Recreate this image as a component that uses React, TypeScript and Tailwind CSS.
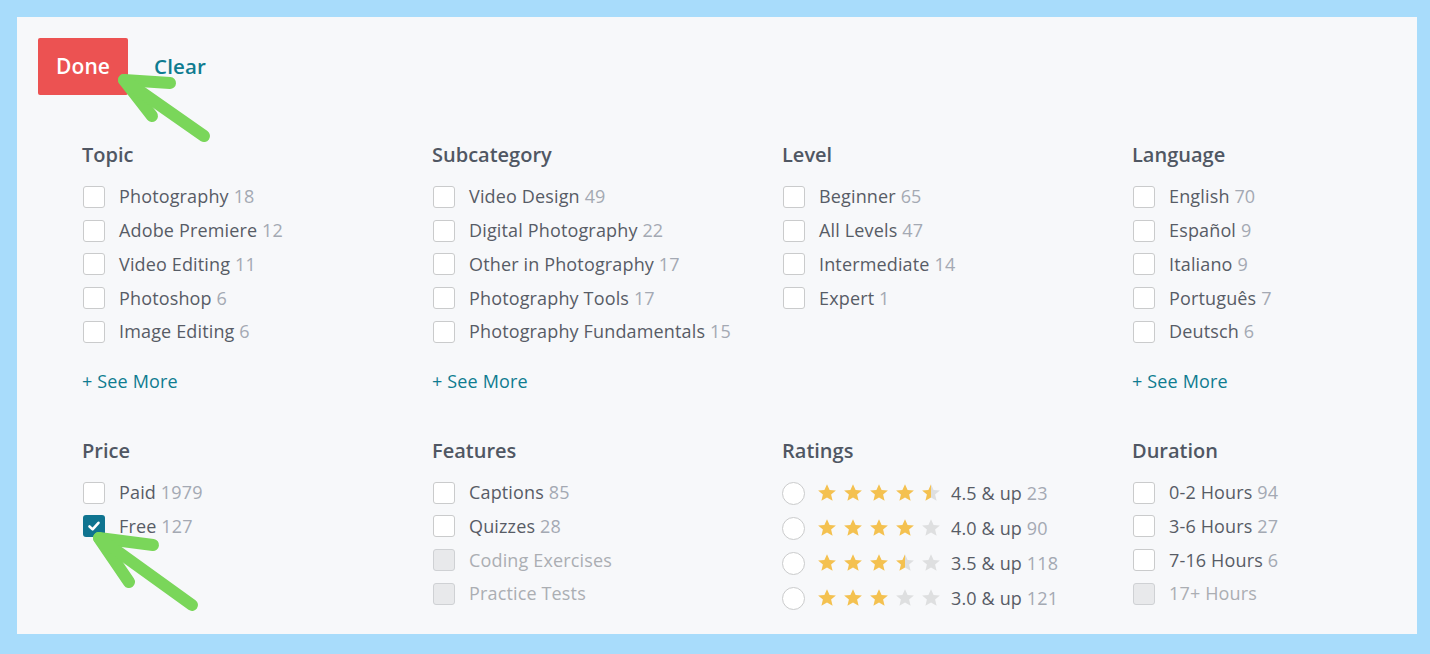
import React from "react";

// filter panel: four columns of checkbox groups, two sections

type Item = { label: string; count?: number; disabled?: boolean; checked?: boolean };
type Group = { title: string; items: Item[]; more?: boolean };

const TOP: Group[] = [
  {
    title: "Topic",
    more: true,
    items: [
      { label: "Photography", count: 18 },
      { label: "Adobe Premiere", count: 12 },
      { label: "Video Editing", count: 11 },
      { label: "Photoshop", count: 6 },
      { label: "Image Editing", count: 6 },
    ],
  },
  {
    title: "Subcategory",
    more: true,
    items: [
      { label: "Video Design", count: 49 },
      { label: "Digital Photography", count: 22 },
      { label: "Other in Photography", count: 17 },
      { label: "Photography Tools", count: 17 },
      { label: "Photography Fundamentals", count: 15 },
    ],
  },
  {
    title: "Level",
    items: [
      { label: "Beginner", count: 65 },
      { label: "All Levels", count: 47 },
      { label: "Intermediate", count: 14 },
      { label: "Expert", count: 1 },
    ],
  },
  {
    title: "Language",
    more: true,
    items: [
      { label: "English", count: 70 },
      { label: "Español", count: 9 },
      { label: "Italiano", count: 9 },
      { label: "Português", count: 7 },
      { label: "Deutsch", count: 6 },
    ],
  },
];

const PRICE: Group = {
  title: "Price",
  items: [
    { label: "Paid", count: 1979 },
    { label: "Free", count: 127, checked: true },
  ],
};
const FEATURES: Group = {
  title: "Features",
  items: [
    { label: "Captions", count: 85 },
    { label: "Quizzes", count: 28 },
    { label: "Coding Exercises", disabled: true },
    { label: "Practice Tests", disabled: true },
  ],
};
const DURATION: Group = {
  title: "Duration",
  items: [
    { label: "0-2 Hours", count: 94 },
    { label: "3-6 Hours", count: 27 },
    { label: "7-16 Hours", count: 6 },
    { label: "17+ Hours", disabled: true },
  ],
};

const RATINGS = [
  { value: 4.5, label: "4.5 & up", count: 23 },
  { value: 4.0, label: "4.0 & up", count: 90 },
  { value: 3.5, label: "3.5 & up", count: 118 },
  { value: 3.0, label: "3.0 & up", count: 121 },
];

function Box({ checked, disabled }: { checked?: boolean; disabled?: boolean }) {
  if (checked) {
    return (
      <span className="w-[22px] h-[22px] rounded-[3px] bg-[#0f7490] flex items-center justify-center flex-shrink-0">
        <svg width="14" height="14" viewBox="0 0 14 14">
          <path d="M2.5 7.5 L5.6 10.4 L11.5 3.8" fill="none" stroke="#fff" strokeWidth="2.6" strokeLinecap="round" strokeLinejoin="round" />
        </svg>
      </span>
    );
  }
  return (
    <span
      className={
        disabled
          ? "w-[22px] h-[22px] rounded-[3px] border border-[#cfd1d4] bg-[#e8e9eb] flex-shrink-0"
          : "w-[22px] h-[22px] rounded-[3px] border border-[#cacbcc] bg-white flex-shrink-0"
      }
    />
  );
}

function Row({ item }: { item: Item }) {
  return (
    <div className="h-[33.75px] flex items-center pl-px">
      <Box checked={item.checked} disabled={item.disabled} />
      <span className={item.disabled ? "ml-[14px] text-[#abaeb3]" : "ml-[14px] text-[#575c66]"}>
        {item.label}
        {item.count !== undefined && <span className="text-[#a4a9b3]"> {item.count}</span>}
      </span>
    </div>
  );
}

function Heading({ children }: { children: React.ReactNode }) {
  return <h3 className="text-[20px] leading-[28px] font-semibold text-[#505763] mb-[11px] tracking-normal">{children}</h3>;
}

function GroupCol({ g }: { g: Group }) {
  return (
    <div>
      <Heading>{g.title}</Heading>
      {g.items.map((it) => (
        <Row key={it.label} item={it} />
      ))}
      {g.more && <div className="mt-[20px] leading-[24px] text-[#0f7c90]">+ See More</div>}
    </div>
  );
}

function Star({ fill, id }: { fill: number; id: string }) {
  return (
    <svg width="20" height="20" viewBox="0 0 20 20" className="flex-shrink-0">
      <defs>
        <linearGradient id={id} x1="0" x2="1" y1="0" y2="0">
          <stop offset={fill} stopColor="#f4c150" />
          <stop offset={fill} stopColor="#dedfe0" />
        </linearGradient>
      </defs>
      <path
        d="M10 1.2 L12.6 7 L18.9 7.5 L14.1 11.6 L15.6 17.8 L10 14.5 L4.4 17.8 L5.9 11.6 L1.1 7.5 L7.4 7 Z"
        fill={`url(#${id})`}
      />
    </svg>
  );
}

function Ratings() {
  return (
    <div>
      <Heading>Ratings</Heading>
      {RATINGS.map((r, ri) => (
        <div key={r.label} className="h-[35px] flex items-center">
          <span className="w-[23px] h-[23px] rounded-full border border-[#cacbcc] bg-white flex-shrink-0" />
          <div className="ml-[12px] flex gap-[6px]">
            {[0, 1, 2, 3, 4].map((i) => (
              <Star key={i} id={`s${ri}-${i}`} fill={Math.max(0, Math.min(1, r.value - i))} />
            ))}
          </div>
          <span className="ml-[10px] text-[#575c66]">
            {r.label} <span className="text-[#a4a9b3]">{r.count}</span>
          </span>
        </div>
      ))}
    </div>
  );
}

export default function App() {
  return (
    <div
      className="relative w-[1430px] h-[654px] bg-[#a8dcfb] p-[17px] overflow-hidden text-[18px] tracking-[0.15px]"
      style={{ fontFamily: '"Open Sans", "Noto Sans", sans-serif' }}
    >
      <div className="w-[1400px] h-[617px] bg-[#f7f8fa] pt-[21px] pl-[21px]">
        <div className="flex items-center">
          <button className="w-[90px] h-[57px] bg-[#ec5252] rounded-[2px] text-white text-[21px] font-semibold">
            Done
          </button>
          <button className="ml-[26px] text-[#0f7c90] text-[20.5px] font-semibold">Clear</button>
        </div>

        <div className="ml-[44px] mt-[46px] grid grid-cols-[350px_350px_350px_350px]">
          {TOP.map((g) => (
            <GroupCol key={g.title} g={g} />
          ))}
        </div>

        <div className="ml-[44px] mt-[44px] grid grid-cols-[350px_350px_350px_350px]">
          <GroupCol g={PRICE} />
          <GroupCol g={FEATURES} />
          <Ratings />
          <GroupCol g={DURATION} />
        </div>
      </div>

      {/* green annotation arrows */}
      <svg className="absolute inset-0 pointer-events-none" width="1430" height="654" viewBox="0 0 1430 654">
        <g fill="none" stroke="#7ad65a" strokeWidth="12" strokeLinecap="round" strokeLinejoin="round">
          <path d="M170 83 L124 80 L152 116" />
          <path d="M124 80 L204 136" />
          <path d="M153 545 L99 538 L129 582" />
          <path d="M99 538 L192 605" />
        </g>
      </svg>
    </div>
  );
}
